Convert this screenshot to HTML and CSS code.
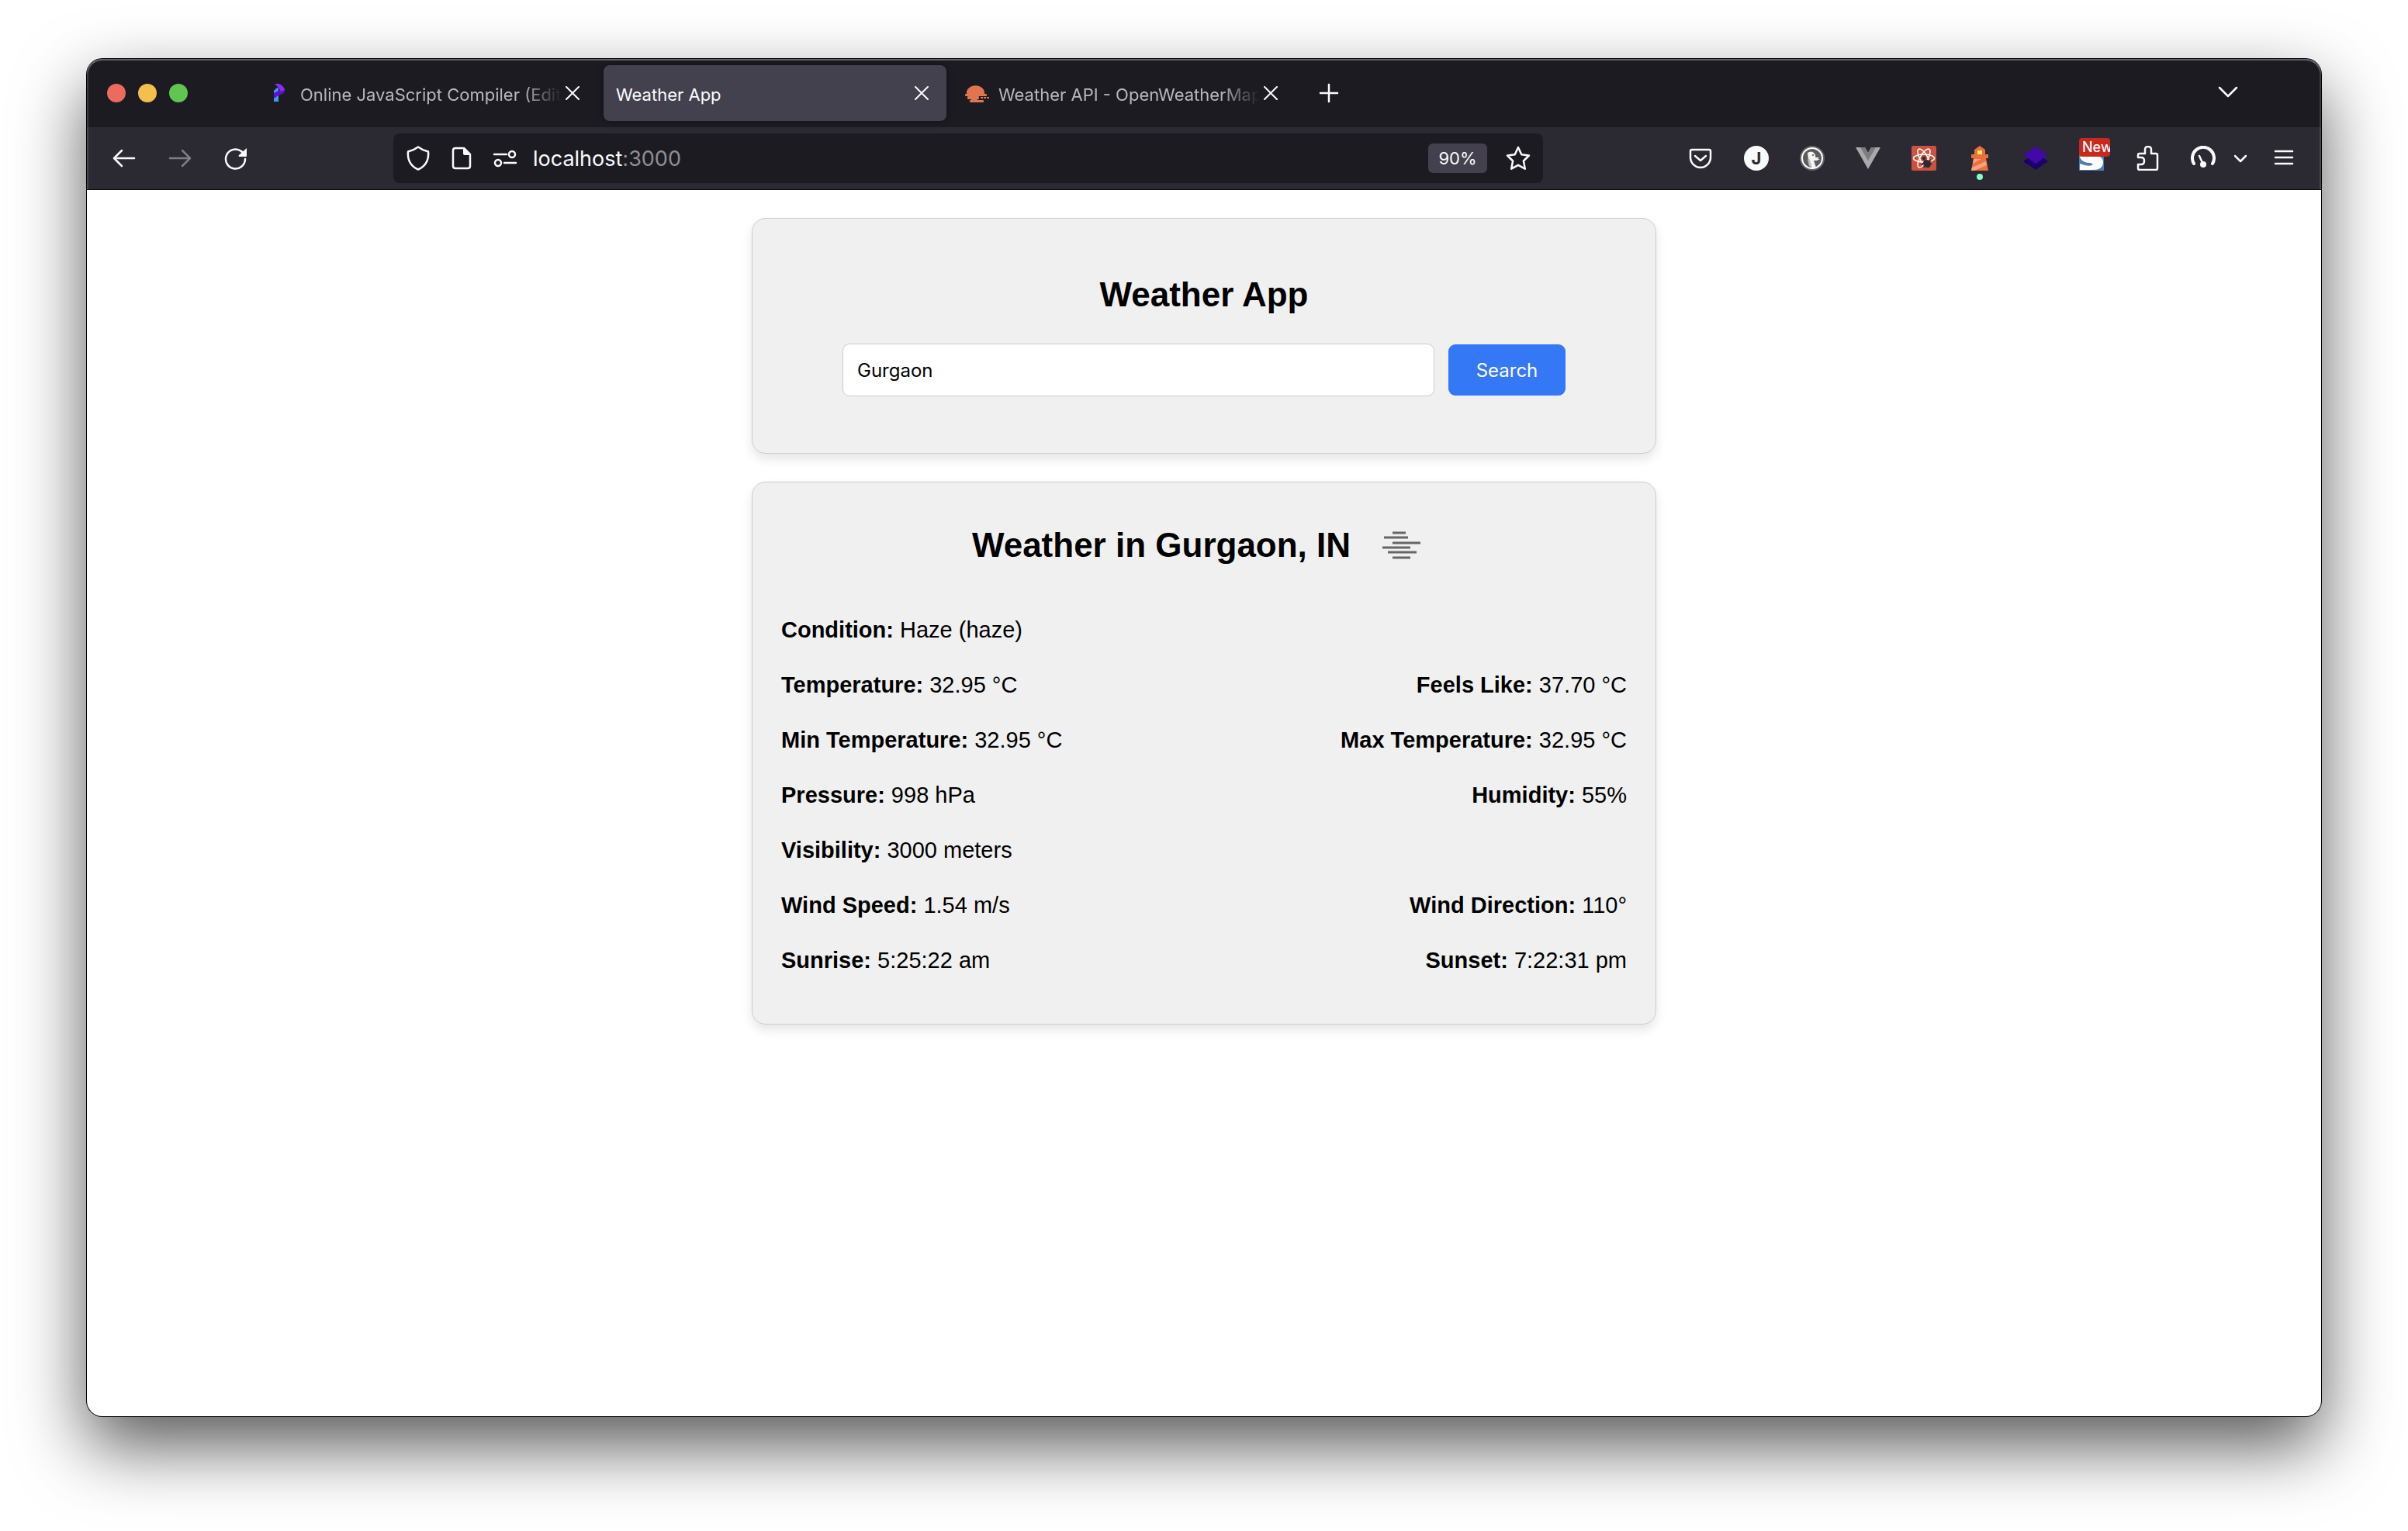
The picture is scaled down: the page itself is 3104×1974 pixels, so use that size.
FILE: index.html
```html
<!DOCTYPE html>
<html lang="en">
<head>
<meta charset="utf-8">
<title>Weather App</title>
<link rel="stylesheet" href="styles.css">
</head>
<body>
<div class="window">
  <header class="chrome">
    <div class="tabstrip">
      <div class="lights"><span class="light close"></span><span class="light minimize"></span><span class="light zoom"></span></div>
      <div class="tabs">
        <div class="tab">
          <svg class="favicon" viewBox="0 0 32 32"><path fill="#3d9be9" d="M9 13l3-3 3-1v18H9z"/><path fill="#5a12d6" d="M9 16l6-3 8-3v3c-1 4-5 5-8 6l-6 4z"/><path fill="#8b2cf5" d="M10 4h5c4 1 7 4 8 8l-5 2-3-5z"/></svg>
          <span class="tab-title fade">Online JavaScript Compiler (Editor)</span>
          <button class="tab-close" aria-label="Close tab"><svg viewBox="0 0 18 18"><path d="M1 1l16 16M17 1L1 17"/></svg></button>
        </div>
        <div class="tab active">
          <span class="tab-title">Weather App</span>
          <button class="tab-close" aria-label="Close tab"><svg viewBox="0 0 18 18"><path d="M1 1l16 16M17 1L1 17"/></svg></button>
        </div>
        <div class="tab">
          <svg class="favicon" viewBox="0 0 32 32" fill="#e0764f"><path d="M2 18v-4a12 11 0 0 1 23 0v4z"/><rect y="17" width="28" height="3" rx="1"/><rect x="3" y="20" width="15" height="4" rx="1"/><rect x="20" y="21" width="3" height="2"/><rect x="24" y="21" width="3" height="2"/><rect x="28" y="21" width="3" height="2"/><rect x="8" y="23" width="8" height="3"/><rect x="6" y="25" width="18" height="3" rx="1"/></svg>
          <span class="tab-title fade">Weather API - OpenWeatherMap</span>
          <button class="tab-close" aria-label="Close tab"><svg viewBox="0 0 18 18"><path d="M1 1l16 16M17 1L1 17"/></svg></button>
        </div>
      </div>
      <button class="icon-button new-tab" aria-label="New tab"><svg class="line" viewBox="0 0 32 32"><path d="M16 5v22M5 16h22"/></svg></button>
      <button class="icon-button list-tabs" aria-label="List all tabs"><svg class="line" viewBox="0 0 32 32"><path d="M5 9l11 11L27 9"/></svg></button>
    </div>
    <div class="toolbar">
      <nav class="history">
        <button class="icon-button" aria-label="Back"><svg class="line" viewBox="0 0 32 32"><path d="M29 16H4M13 6L3 16l10 10"/></svg></button>
        <button class="icon-button" aria-label="Forward" disabled><svg class="line" viewBox="0 0 32 32"><path d="M3 16h25M19 6l10 10-10 10"/></svg></button>
        <button class="icon-button" aria-label="Reload"><svg class="line" viewBox="0 0 32 32"><path d="M28 17a12.500 12.500 0 1 1-5-10l4 4"/><path fill="currentColor" stroke="none" d="M30 3v10q0 1-1 1H20q-1-1 0-2z"/></svg></button>
      </nav>
      <div class="urlbar">
        <button class="icon-button" aria-label="Tracking protection"><svg class="line" viewBox="0 0 32 32"><path d="M16 1.500q6 4.500 13 6c1 11-4 19-13 23C7 26.500 2 18.500 3 7.500q7-1.500 13-6z"/></svg></button>
        <button class="icon-button" aria-label="Page info"><svg class="line" viewBox="0 0 32 32"><path d="M8 3h11l8 8v15q0 3-3 3H8q-3 0-3-3V6q0-3 3-3z"/><path fill="currentColor" stroke="none" d="M18 3l9 9h-7q-2 0-2-2z"/></svg></button>
        <button class="icon-button" aria-label="Permissions"><svg class="line" viewBox="0 0 32 32"><path d="M2 11h16M15 22h15"/><circle cx="25" cy="11" r="4"/><circle cx="7" cy="22" r="4"/></svg></button>
        <span class="address">localhost<span class="port">:3000</span></span>
        <button class="zoom-level">90%</button>
        <button class="icon-button" aria-label="Bookmark"><svg class="line" viewBox="0 0 32 32"><path d="M16 2l4.300 9.200 9.700 1.300-7.100 7 1.900 10.200L16 24.800l-8.800 4.900 1.900-10.200-7.100-7 9.700-1.300z"/></svg></button>
      </div>
      <div class="extensions">
        <button class="icon-button" aria-label="Pocket"><svg class="line" viewBox="0 0 32 32"><path d="M5 5h22q2 0 2 2v8c0 7-6 13-13 13S3 22 3 15V7q0-2 2-2z"/><path d="M9 13l7 6 7-6"/></svg></button>
        <button class="icon-button" aria-label="Account"><span class="avatar">J</span></button>
        <button class="icon-button" aria-label="DuckDuckGo"><svg viewBox="0 0 32 32"><circle cx="16" cy="16" r="16" fill="#66666a"/><circle cx="16" cy="16" r="13" fill="#5c5c5c" stroke="#fff" stroke-width="2"/><path fill="#f4f4f4" d="M10 9q5-3 8 0 3 3 2 6h5l-2 2h3l-4 2h-4l2 6 1 3q-3 2-6 0-4-4-4-10z"/><path fill="#bbb" d="M12 16l4 12-4-2-2-8z"/><circle cx="17" cy="12" r="1" fill="#444"/></svg></button>
        <button class="icon-button" aria-label="Vue devtools"><svg viewBox="0 0 32 32"><path fill="#a9a9a9" d="M0 2h12l4 7 4-7h12L16 30z"/><path fill="#7d7d7d" d="M6 2h6l4 7 4-7h6L16 19z"/></svg></button>
        <button class="icon-button" aria-label="React devtools"><svg viewBox="0 0 32 32"><rect width="32" height="32" rx="2" fill="#cb5240"/><g fill="none" stroke="#fff" stroke-width="1.500"><ellipse cx="16" cy="16" rx="13.500" ry="5"/><ellipse cx="16" cy="16" rx="13.500" ry="5" transform="rotate(60 16 16)"/><ellipse cx="16" cy="16" rx="13.500" ry="5" transform="rotate(120 16 16)"/></g><path fill="#cb5240" d="M17 20h10v9H14z"/><g fill="#2b2a33" stroke="#2b2a33"><circle cx="16" cy="16" r="2"/><ellipse cx="20" cy="23" rx="4" ry="5" transform="rotate(-35 20 23)"/><path stroke-width="2" d="M13 24l6-3M16 28l4-4M22 28l-1-5M26 24l-4-3M25 18l-4 3"/></g></svg></button>
        <button class="icon-button" aria-label="Lighthouse"><svg viewBox="0 0 32 32"><path fill="#ee6e3c" d="M9 5l7-5 7 5v6h4v5H5v-5h4zM8 16h16l3 16H5z"/><path fill="#f3a488" d="M8 17h10L7 23zM24 20L6 28l-1 4h4l16-7z"/><rect x="13" y="6" width="6" height="5" fill="#ffee58"/></svg><span class="status-dot"></span></button>
        <button class="icon-button" aria-label="Layers"><svg viewBox="0 0 32 32"><path fill="#1b0069" d="M16 9l16 11-16 11L0 20z"/><path fill="#4208a8" d="M16 1l16 11-16 11L0 12z"/></svg></button>
        <button class="icon-button" aria-label="Stylus"><svg viewBox="0 0 32 32"><rect width="32" height="32" fill="#4b7eb4"/><path fill="#fff" d="M1 12h22q8 3 8 9 0 10-13 10H1v-8q10 4 16 2 2-2-3-3-8 0-12-5z"/></svg><span class="badge">New</span></button>
        <button class="icon-button" aria-label="Extensions"><svg class="line" viewBox="0 0 32 32"><path d="M6 10h7V5q0-4 4-4t4 4v5h6q2 0 2 2v17q0 2-2 2H6q-2 0-2-2v-5h4q4 0 4-4.500T8 15H4v-3q0-2 2-2z"/></svg></button>
        <button class="icon-button" aria-label="Performance"><svg class="line" viewBox="0 0 32 32"><path stroke-width="4" d="M4 23a14 14 0 1 1 24 0"/><path d="M11 13l5 11"/><circle cx="16" cy="24" r="4" fill="currentColor" stroke="none"/></svg></button>
      </div>
      <button class="icon-button more" aria-label="More"><svg class="line" viewBox="0 0 16 16"><path d="M1 5l7 7 7-7"/></svg></button>
      <button class="icon-button menu" aria-label="Menu"><svg class="line" viewBox="0 0 32 32"><path d="M5 7h22M5 15h22M5 23h22"/></svg></button>
    </div>
  </header>
  <main class="page">
    <section class="card search-card">
      <h1 class="title">Weather App</h1>
      <form class="search">
        <input class="city" type="text" value="Gurgaon" aria-label="City">
        <button class="submit" type="button">Search</button>
      </form>
    </section>
    <section class="card weather-card">
      <div class="heading">
        <h2 class="title">Weather in Gurgaon, IN</h2>
        <svg class="condition-icon" viewBox="0 0 90 90" stroke="#666" stroke-width="3"><path d="M34 29h17M23 35h31M34 42h36M21 48h36M28 54h37M34 61h23"/></svg>
      </div>
      <div class="details">
        <p class="row"><span><strong>Condition:</strong> Haze (haze)</span></p>
        <p class="row"><span><strong>Temperature:</strong> 32.95 °C</span><span><strong>Feels Like:</strong> 37.70 °C</span></p>
        <p class="row"><span><strong>Min Temperature:</strong> 32.95 °C</span><span><strong>Max Temperature:</strong> 32.95 °C</span></p>
        <p class="row"><span><strong>Pressure:</strong> 998 hPa</span><span><strong>Humidity:</strong> 55%</span></p>
        <p class="row"><span><strong>Visibility:</strong> 3000 meters</span></p>
        <p class="row"><span><strong>Wind Speed:</strong> 1.54 m/s</span><span><strong>Wind Direction:</strong> 110°</span></p>
        <p class="row"><span><strong>Sunrise:</strong> 5:25:22 am</span><span><strong>Sunset:</strong> 7:22:31 pm</span></p>
      </div>
    </section>
  </main>
</div>
</body>
</html>
```
FILE: styles.css
```css
* {
  box-sizing: border-box;
}

body {
  display: flex;
  flex-direction: column;
  min-height: 100vh;
  margin: 0;
  padding: 76px 112px 148px;
  background: #fff;
  color: #000;
  font-family: "Liberation Sans", Arial, sans-serif;
  font-size: 29px;
}

button {
  padding: 0;
  border: 0;
  background: none;
  color: inherit;
  font: inherit;
}

/* Browser window */
.window {
  display: flex;
  flex: 1;
  flex-direction: column;
  border-radius: 20px;
  background: #fff;
  box-shadow: 0 0 0 1px #000, 0 38px 90px rgba(0, 0, 0, 0.66);
}

.chrome {
  position: relative;
  overflow: hidden;
  border-bottom: 1px solid #0c0c0d;
  border-radius: 20px 20px 0 0;
  background: #2b2a33;
  color: #fbfbfe;
  font-family: Inter, sans-serif;
  font-size: 22px;
}

.chrome::after {
  position: absolute;
  inset: 0;
  border-radius: inherit;
  box-shadow: inset 0 2px 0 rgba(255, 255, 255, 0.3), inset 2px 0 0 rgba(255, 255, 255, 0.15), inset -2px 0 0 rgba(255, 255, 255, 0.15);
  content: "";
  pointer-events: none;
}

.tabstrip {
  display: flex;
  align-items: center;
  height: 88px;
  padding: 0 104px 0 26px;
  background: #1c1b22;
}

.lights {
  display: flex;
  gap: 16px;
  width: 190px;
}

.light {
  width: 24px;
  height: 24px;
  border-radius: 50%;
}

.close { background: #ed6a5e; }
.minimize { background: #f5bf4f; }
.zoom { background: #61c554; }

.tabs {
  display: flex;
  gap: 8px;
}

.tab {
  display: flex;
  align-items: center;
  width: 442px;
  height: 72px;
  padding: 0 22px 0 16px;
  border-radius: 8px;
  color: #b8b8bc;
}

.tab.active {
  background: #42414d;
  box-shadow: 0 0 8px rgba(0, 0, 0, 0.4);
  color: #fbfbfe;
}

.favicon {
  flex: none;
  width: 32px;
  height: 32px;
  margin-right: 11px;
}

.tab-title {
  flex: 1;
  overflow: hidden;
  padding-top: 4px;
  line-height: 32px;
  white-space: nowrap;
}

.fade {
  mask-image: linear-gradient(to left, transparent, #000 50px);
}

.tab-close {
  display: flex;
  margin-left: 4px;
  color: #fbfbfe;
}

.tab-close svg {
  width: 20px;
  height: 18px;
  fill: none;
  stroke: currentColor;
  stroke-linecap: round;
  stroke-width: 2;
}

.icon-button {
  position: relative;
  display: flex;
  flex: none;
}

.icon-button:disabled {
  opacity: 0.4;
}

.icon-button svg {
  width: 32px;
  height: 32px;
}

.line {
  fill: none;
  stroke: currentColor;
  stroke-linecap: round;
  stroke-linejoin: round;
  stroke-width: 2.5;
}

.new-tab {
  margin-left: 27px;
}

.list-tabs {
  margin-left: auto;
}

.toolbar {
  display: flex;
  align-items: center;
  height: 80px;
  padding: 0 32px;
}

.history {
  display: flex;
  flex: none;
  gap: 40px;
  width: 363px;
}

.urlbar {
  display: flex;
  flex: 0 1 1482px;
  align-items: center;
  gap: 24px;
  height: 64px;
  padding: 0 16px;
  border-radius: 8px;
  background: #1c1b22;
}

.address {
  flex: 1;
  margin-left: -4px;
  font-size: 27px;
}

.port {
  color: #8f8f96;
}

.zoom-level {
  width: 76px;
  height: 38px;
  border-radius: 6px;
  background: #42414d;
  font-size: 22px;
}

.extensions {
  display: flex;
  gap: 40px;
  margin-left: auto;
}

.avatar {
  width: 32px;
  height: 32px;
  border-radius: 50%;
  background: #fbfbfe;
  color: #2b2a33;
  font-size: 22px;
  font-weight: 700;
  line-height: 32px;
}

.status-dot {
  position: absolute;
  top: 36px;
  left: 12px;
  width: 8px;
  height: 8px;
  border-radius: 50%;
  background: #88ffc5;
}

.badge {
  position: absolute;
  top: -10px;
  left: 0;
  width: 40px;
  overflow: hidden;
  padding-left: 4px;
  border-radius: 4px;
  background: #c9281c;
  font-size: 18px;
  font-weight: 500;
  line-height: 24px;
  text-align: left;
}

.more {
  margin-left: 24px;
}

.icon-button.more svg {
  width: 16px;
  height: 16px;
}

.menu {
  margin-left: 32px;
}

/* Weather page */
.page {
  display: flex;
  flex-direction: column;
  align-items: center;
  gap: 36px;
  padding: 36px;
}

.card {
  width: 100%;
  max-width: 1166px;
  border: 1px solid #ccc;
  border-radius: 18px;
  background: #f0f0f0;
  box-shadow: 0 7px 14px rgba(0, 0, 0, 0.1);
}

.title {
  margin: 0;
  font-size: 44px;
  line-height: 50px;
}

.search-card {
  padding: 73px 116px;
  text-align: center;
}

.search {
  display: flex;
  align-items: center;
  gap: 18px;
  margin-top: 38px;
}

.city {
  flex: 1;
  min-width: 0;
  height: 68px;
  padding: 0 18px;
  border: 1px solid #ccc;
  border-radius: 9px;
  background: #fff;
  color: #000;
  font-family: Inter, sans-serif;
  font-size: 24px;
}

.submit {
  width: 151px;
  height: 66px;
  border-radius: 9px;
  background: #3478f6;
  color: #fff;
  font-family: Inter, sans-serif;
  font-size: 24px;
}

.weather-card {
  padding: 36px 37px;
}

.heading {
  display: flex;
  align-items: center;
  justify-content: center;
  gap: 20px;
}

.condition-icon {
  width: 90px;
  height: 90px;
}

.details {
  display: flex;
  flex-direction: column;
  gap: 38px;
  padding: 48px 0 29px;
}

.row {
  display: flex;
  justify-content: space-between;
  margin: 0;
  line-height: 33px;
}
```
